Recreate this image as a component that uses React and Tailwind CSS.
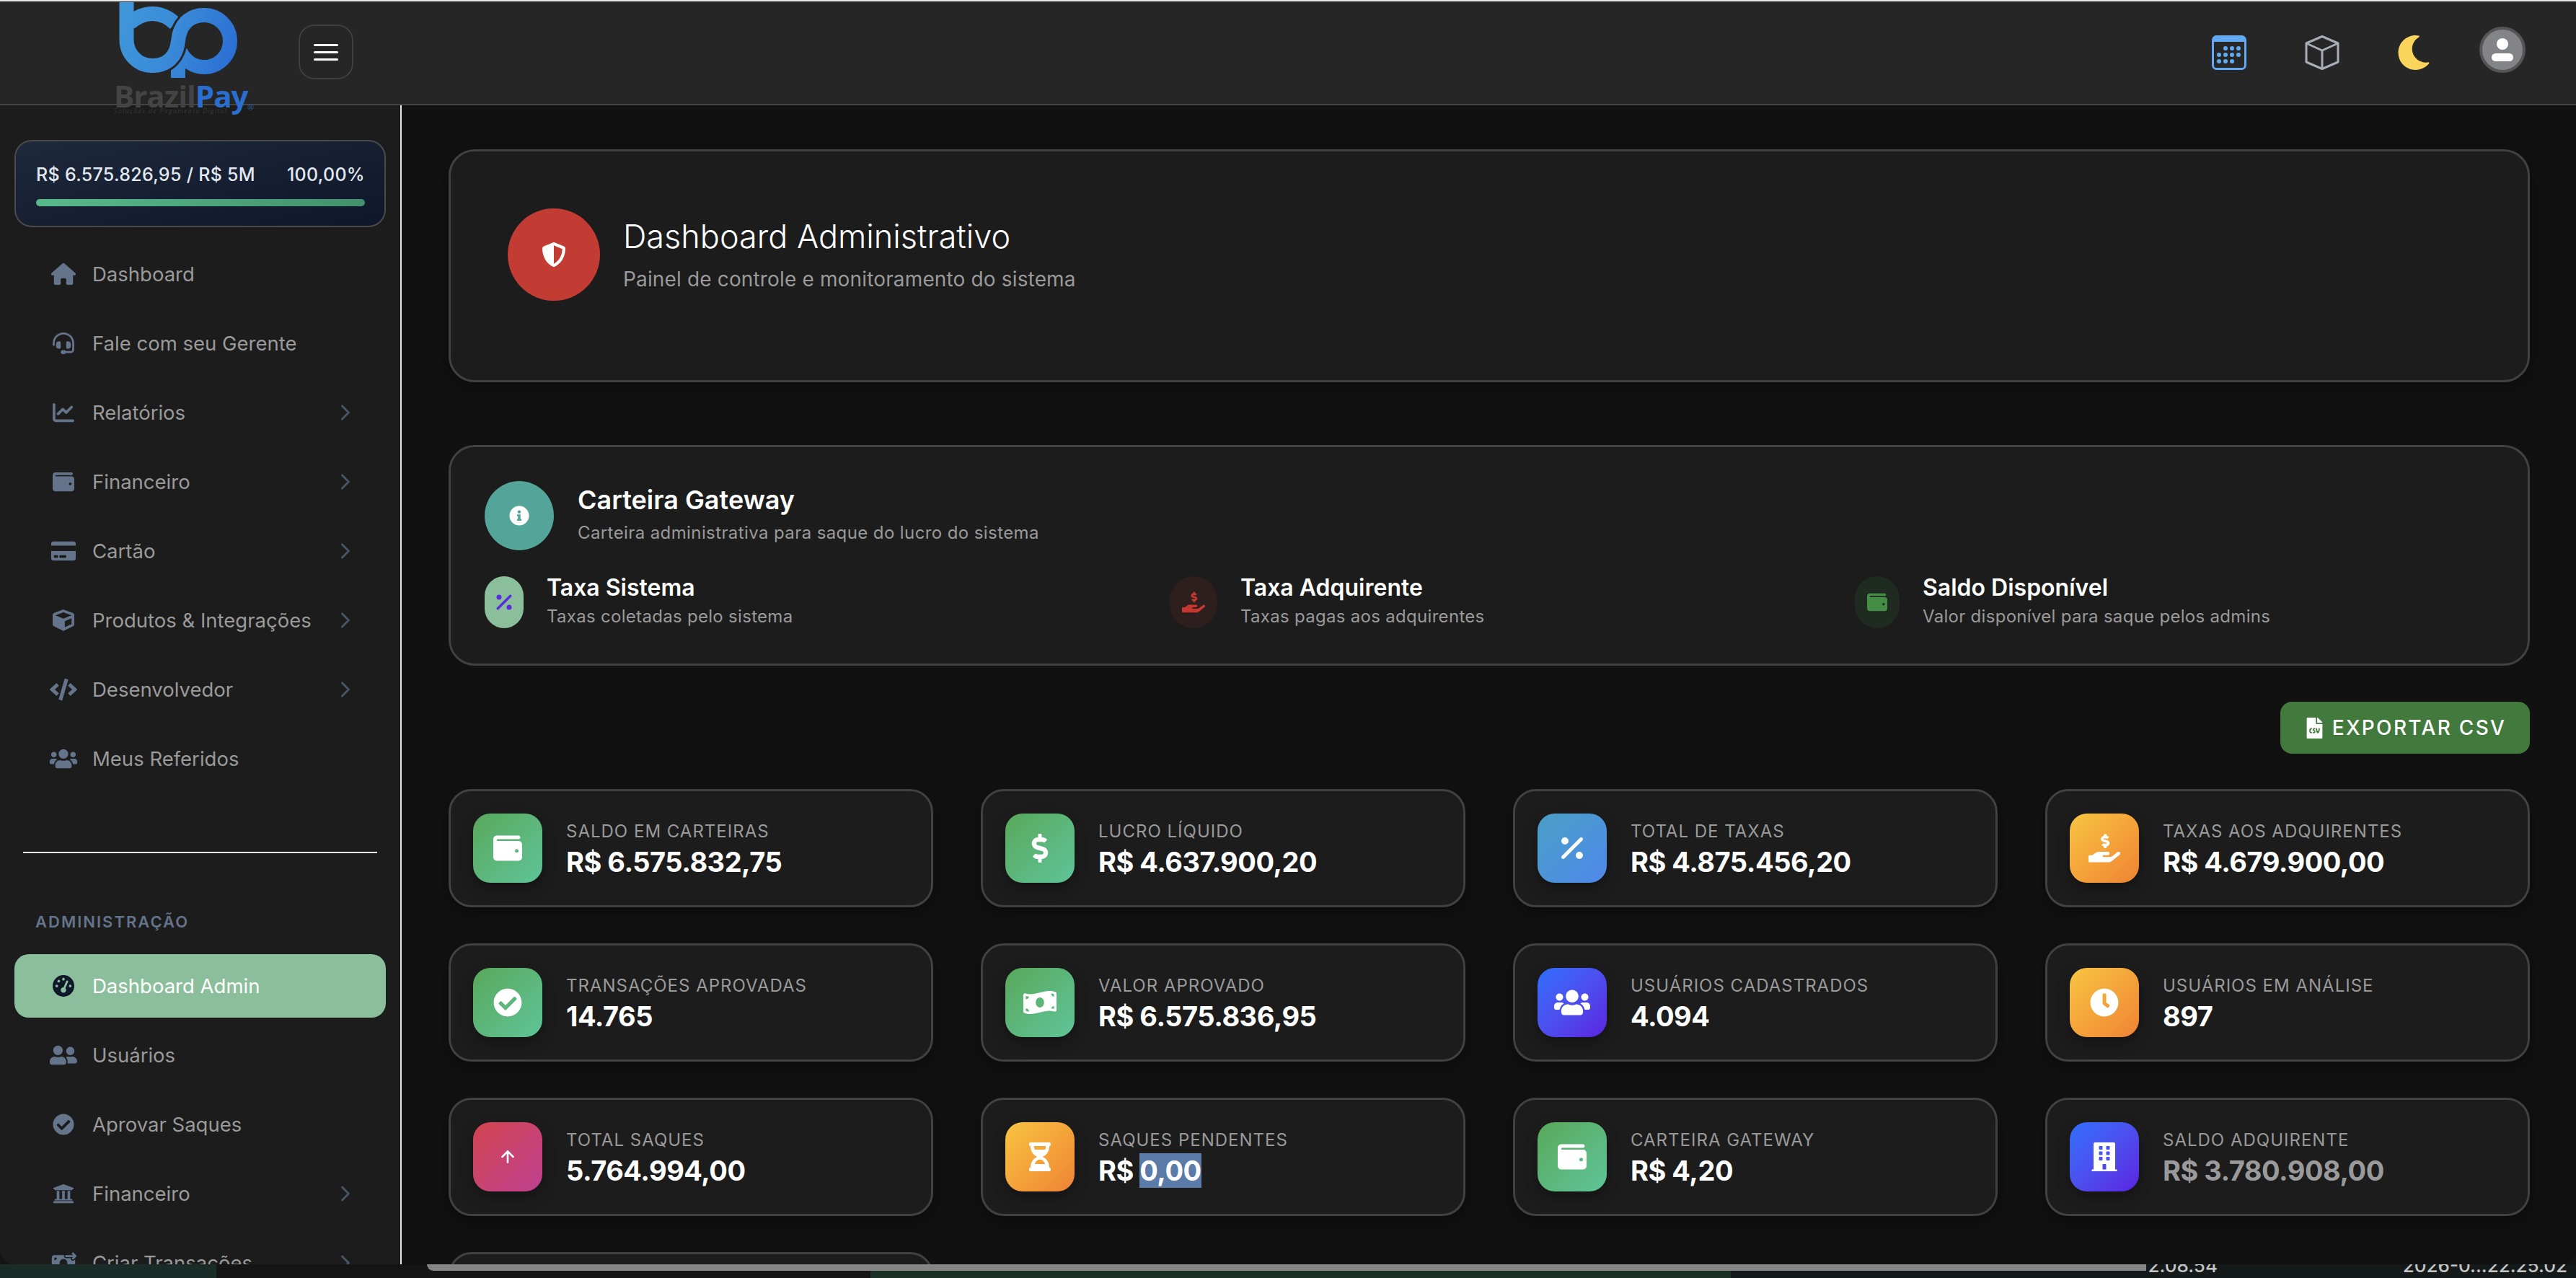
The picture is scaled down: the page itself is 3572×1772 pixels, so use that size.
import { ChevronRight, ArrowUp } from "lucide-react";
import {
  FaUsers, FaUserFriends, FaCheckCircle, FaUniversity, FaShieldAlt, FaInfoCircle, FaHandHoldingUsd, FaFileCsv,
  FaDollarSign, FaMoneyBillWave, FaClock, FaHourglassHalf, FaBuilding, FaMoon, FaCube, FaCode, FaCreditCard,
} from "react-icons/fa";
import { FaGaugeHigh, FaMoneyBillTransfer, FaHouse, FaHeadset, FaChartLine, FaWallet, FaPercent } from "react-icons/fa6";

const GREEN = "bg-gradient-to-br from-[#59a85a] to-[#5fc498]";
const BLUE = "bg-gradient-to-br from-[#4a9fc6] to-[#4f88ea]";
const ORANGE = "bg-gradient-to-br from-[#f8c541] to-[#ee8234]";
const INDIGO = "bg-gradient-to-br from-[#2c6ffb] to-[#5a21e0]";
const RED = "bg-gradient-to-br from-[#d2444c] to-[#bf3f90]";

const menuTop = [
  { label: "Dashboard", icon: <FaHouse size={34} /> },
  { label: "Fale com seu Gerente", icon: <FaHeadset size={30} /> },
  { label: "Relatórios", icon: <FaChartLine size={30} />, sub: true },
  { label: "Financeiro", icon: <FaWallet size={30} />, sub: true },
  { label: "Cartão", icon: <FaCreditCard size={34} />, sub: true },
  { label: "Produtos & Integrações", icon: <FaCube size={30} />, sub: true },
  { label: "Desenvolvedor", icon: <FaCode size={38} />, sub: true },
  { label: "Meus Referidos", icon: <FaUsers size={38} /> },
];

const menuAdmin = [
  { label: "Dashboard Admin", icon: <FaGaugeHigh size={30} />, active: true },
  { label: "Usuários", icon: <FaUserFriends size={38} /> },
  { label: "Aprovar Saques", icon: <FaCheckCircle size={30} /> },
  { label: "Financeiro", icon: <FaUniversity size={30} />, sub: true },
  { label: "Criar Transações", icon: <FaMoneyBillTransfer size={36} />, sub: true },
];

const stats = [
  { label: "SALDO EM CARTEIRAS", value: "R$ 6.575.832,75", bg: GREEN, icon: <FaWallet size={40} /> },
  { label: "LUCRO LÍQUIDO", value: "R$ 4.637.900,20", bg: GREEN, icon: <FaDollarSign size={40} /> },
  { label: "TOTAL DE TAXAS", value: "R$ 4.875.456,20", bg: BLUE, icon: <FaPercent size={40} /> },
  { label: "TAXAS AOS ADQUIRENTES", value: "R$ 4.679.900,00", bg: ORANGE, icon: <FaHandHoldingUsd size={44} /> },
  { label: "TRANSAÇÕES APROVADAS", value: "14.765", bg: GREEN, icon: <FaCheckCircle size={40} /> },
  { label: "VALOR APROVADO", value: "R$ 6.575.836,95", bg: GREEN, icon: <FaMoneyBillWave size={46} /> },
  { label: "USUÁRIOS CADASTRADOS", value: "4.094", bg: INDIGO, icon: <FaUsers size={50} /> },
  { label: "USUÁRIOS EM ANÁLISE", value: "897", bg: ORANGE, icon: <FaClock size={40} /> },
  { label: "TOTAL SAQUES", value: "5.764.994,00", bg: RED, icon: <ArrowUp size={26} strokeWidth={2.4} /> },
  { label: "SAQUES PENDENTES", value: "R$ ", selected: "0,00", bg: ORANGE, icon: <FaHourglassHalf size={40} /> },
  { label: "CARTEIRA GATEWAY", value: "R$ 4,20", bg: GREEN, icon: <FaWallet size={40} /> },
  { label: "SALDO ADQUIRENTE", value: "R$ 3.780.908,00", bg: INDIGO, icon: <FaBuilding size={40} />, dim: true },
];

const gatewayItems = [
  { title: "Taxa Sistema", text: "Taxas coletadas pelo sistema", width: "w-[54px]", bg: "bg-[#8bbf9b]", icon: <FaPercent size={28} className="text-[#5b2be0]" /> },
  { title: "Taxa Adquirente", text: "Taxas pagas aos adquirentes", width: "w-[66px]", bg: "bg-[#2e1f1f]", icon: <FaHandHoldingUsd size={32} className="text-[#c5372f]" /> },
  { title: "Saldo Disponível", text: "Valor disponível para saque pelos admins", width: "w-[62px]", bg: "bg-[#1f2a20]", icon: <FaWallet size={28} className="text-[#458c45]" /> },
];

function Logo() {
  return (
    <div className="absolute left-0 top-[-2px] z-10 h-[180px] w-[400px]">
      <svg viewBox="0 0 400 120" className="h-[120px] w-[400px]" fill="none">
        <defs>
          <linearGradient id="bp" gradientUnits="userSpaceOnUse" x1="165" y1="20" x2="330" y2="80">
            <stop offset="0" stopColor="#3f97d9" />
            <stop offset="0.45" stopColor="#3a8bd8" />
            <stop offset="1" stopColor="#2a6dd3" />
          </linearGradient>
        </defs>
        <g stroke="url(#bp)" strokeWidth="20">
          <path d="M180 32 Q195 19 211 19 Q229 19 243 33" />
          <path d="M283 93 A36 36 0 0 1 250 71" />
          <path d="M247 85 V108" />
        </g>
        <path d="M211 91 C235 91 245 75 247 57 C249 35 262 21 283 21" stroke="#262626" strokeWidth="26" />
        <path
          d="M175.5 3 V55 A35.5 36 0 0 0 211 91 C235 91 245 75 247 57 C249 35 262 21 283 21 A36 36 0 0 1 283 93"
          stroke="url(#bp)"
          strokeWidth="20"
        />
      </svg>
      <span className="absolute left-[158px] top-[108px] text-[42px] font-bold leading-[50px] tracking-[-1px] text-[#444444] [font-family:'Open_Sans',sans-serif]">
        Brazil<span className="text-[#2a6fd0]">Pay</span>
      </span>
      <span className="absolute left-[343px] top-[142px] text-[11px] leading-[14px] text-[#2a5c9c] [font-family:'Open_Sans',sans-serif]">®</span>
      <span className="absolute left-[158px] top-[148px] text-[9px] italic leading-[12px] tracking-[1.2px] text-[#383838] [font-family:'Open_Sans',sans-serif]">
        Soluções de Pagamento Digital
      </span>
    </div>
  );
}

function TopIcons() {
  return (
    <div className="ml-auto flex items-center pr-[70px]">
      <svg viewBox="0 0 48 48" className="h-[48px] w-[48px]">
        <rect x="1.5" y="1.5" width="45" height="45" rx="5" fill="none" stroke="#62a9f3" strokeWidth="3" />
        <path d="M1 9 V6 a5 5 0 0 1 5 -5 H42 a5 5 0 0 1 5 5 V9 Z" fill="#62a9f3" />
        {[[19, 18], [28, 18], [37, 18], [10, 27], [19, 27], [28, 27], [37, 27], [10, 36], [19, 36], [28, 36]].map(([cx, cy]) => (
          <circle key={`${cx}-${cy}`} cx={cx} cy={cy} r="3" fill="#62a9f3" />
        ))}
      </svg>
      <svg viewBox="0 0 48 48" className="ml-[81px] h-[48px] w-[48px]" fill="none" stroke="#a7aeb8" strokeWidth="3" strokeLinejoin="round">
        <path d="M24 1.5 L46 11 V37 L24 46.5 L2 37 V11 Z" />
        <path d="M2 11 L24 21 L46 11 M24 21 V46.5" />
      </svg>
      <FaMoon size={48} className="ml-[79px] text-[#fbd45c]" />
      <div className="mb-[8px] ml-[67px] flex h-[64px] w-[64px] flex-col items-center justify-center gap-[5px] rounded-full border-[4px] border-[#555555] bg-[#838487]">
        <div className="h-[16px] w-[16px] rounded-full bg-white" />
        <div className="h-[11px] w-[30px] rounded-full bg-white" />
      </div>
    </div>
  );
}

function MenuItem({ item }) {
  return (
    <div className={`flex h-[88px] items-center rounded-[20px] pl-[48px] pr-[38px] ${item.active ? "bg-[#8bbf9b] text-white" : "text-[#9a9a9a]"}`}>
      <span className={`flex w-[40px] shrink-0 justify-center ${item.active ? "text-[#0f172a]" : "text-[#64748b]"}`}>{item.icon}</span>
      <span className="ml-[20px] whitespace-nowrap text-[27.5px] leading-[36px]">{item.label}</span>
      {item.sub && <ChevronRight size={36} strokeWidth={2} className="ml-auto shrink-0 text-[#475569]" />}
    </div>
  );
}

function Sidebar() {
  return (
    <aside className="flex w-[557px] shrink-0 flex-col overflow-hidden border-r-2 border-[#e6e6e6] bg-[#1c1c1c] px-[20px] pt-[48px]">
      <div className="h-[121px] shrink-0 rounded-[24px] border-2 border-[#4a4a4a] bg-gradient-to-br from-[#1e293b] to-[#0f172a] pl-[28px] pr-[27px] pt-[30px]">
        <div className="flex items-center justify-between whitespace-nowrap text-[25px] font-medium leading-[32px] tracking-[0.3px] text-[#e2e8f0]">
          <span>R$ 6.575.826,95 / R$ 5M</span>
          <span>100,00%</span>
        </div>
        <div className="mt-[18px] h-[10px] rounded-full bg-gradient-to-r from-[#58ba8b] to-[#42916c]" />
      </div>
      <nav className="mt-[21px] flex shrink-0 flex-col gap-[8px]">
        {menuTop.map((item) => <MenuItem key={item.label} item={item} />)}
      </nav>
      <div className="mx-[12px] mt-[85px] h-[2px] shrink-0 bg-[#e6e6e6]" />
      <div className="ml-[29px] mt-[81px] h-[28px] shrink-0 text-[22px] font-semibold leading-[28px] tracking-[2px] text-[#64748b]">ADMINISTRAÇÃO</div>
      <nav className="mt-[31px] flex shrink-0 flex-col gap-[8px]">
        {menuAdmin.map((item) => <MenuItem key={item.label} item={item} />)}
      </nav>
    </aside>
  );
}

function StatCard({ stat }) {
  return (
    <div className="flex h-[164px] items-center rounded-[32px] border-[3px] border-[#414141] bg-[#1c1c1c] pl-[31px] shadow-[0_8px_20px_rgba(0,0,0,0.35)]">
      <div className={`flex h-[96px] w-[96px] shrink-0 items-center justify-center rounded-[24px] text-white shadow-[0_8px_18px_rgba(0,0,0,0.3)] ${stat.bg}`}>{stat.icon}</div>
      <div className="ml-[33px] mt-[6px] min-w-0">
        <div className="whitespace-nowrap text-[24px] leading-[28px] tracking-[1px] text-[#9a9a9a]">{stat.label}</div>
        <div className={`mt-[4px] whitespace-pre text-[38px] font-bold leading-[48px] tracking-[-0.5px] ${stat.dim ? "text-[#9a9a9a]" : "text-white"}`}>
          {stat.value}
          {stat.selected && <span className="inline-block bg-[#5b7ba8]">{stat.selected}</span>}
        </div>
      </div>
    </div>
  );
}

export default function App() {
  return (
    <div className="flex h-[1772px] w-[3572px] flex-col overflow-hidden bg-[#141414] [font-family:Inter,sans-serif]">
      <div className="flex h-[1753px] shrink-0 flex-col overflow-hidden rounded-b-[20px] border-t-2 border-[#e8e8e8] bg-[#111111]">
        <header className="relative flex h-[144px] shrink-0 items-center border-b-2 border-[#444444] bg-[#262626] pl-[414px]">
          <Logo />
          <button className="mb-[2px] flex h-[76px] w-[76px] flex-col items-center justify-center gap-[7px] rounded-[22px] border-2 border-[#3f3f3f]">
            <span className="h-[3px] w-[34px] rounded-full bg-white" />
            <span className="h-[3px] w-[34px] rounded-full bg-white" />
            <span className="h-[3px] w-[34px] rounded-full bg-white" />
          </button>
          <TopIcons />
        </header>
        <div className="flex min-h-0 flex-1">
          <Sidebar />
          <main className="min-w-0 flex-1 overflow-hidden pl-[65px] pr-[64px] pt-[61px]">
            <section className="flex h-[323px] items-start rounded-[36px] border-[3px] border-[#414141] bg-[#1c1c1c] pl-[79px] pt-[79px] shadow-[0_8px_24px_rgba(0,0,0,0.3)]">
              <div className="flex h-[128px] w-[128px] shrink-0 items-center justify-center rounded-full bg-[#c23c34] text-white">
                <FaShieldAlt size={34} />
              </div>
              <div className="ml-[32px] pt-[10px]">
                <h1 className="text-[45px] font-light leading-[58px] text-white">Dashboard Administrativo</h1>
                <p className="mt-[14px] text-[28px] leading-[32px] tracking-[0.15px] text-[#9a9a9a]">Painel de controle e monitoramento do sistema</p>
              </div>
            </section>

            <section className="mt-[87px] h-[306px] rounded-[36px] border-[3px] border-[#414141] bg-[#1c1c1c] px-[47px] pt-[47px]">
              <div className="flex items-center">
                <div className="flex h-[96px] w-[96px] shrink-0 items-center justify-center rounded-full bg-[#52a598] text-white">
                  <FaInfoCircle size={28} />
                </div>
                <div className="ml-[33px] pt-[2px]">
                  <div className="mb-[-4px] text-[36px] font-semibold leading-[44px] text-white">Carteira Gateway</div>
                  <div className="mb-[8px] mt-[14px] text-[24px] leading-[28px] tracking-[0.4px] text-[#9a9a9a]">Carteira administrativa para saque do lucro do sistema</div>
                </div>
              </div>
              <div className="mt-[36px] grid grid-cols-3 gap-x-[64px]">
                {gatewayItems.map((g) => (
                  <div key={g.title} className="flex items-center">
                    <div className={`flex h-[72px] shrink-0 items-center justify-center rounded-full ${g.width} ${g.bg}`}>{g.icon}</div>
                    <div className="ml-[32px] mt-[-6px]">
                      <div className="text-[32px] font-semibold leading-[40px] text-white">{g.title}</div>
                      <div className="mt-[6px] text-[24px] leading-[28px] tracking-[0.3px] text-[#9a9a9a]">{g.text}</div>
                    </div>
                  </div>
                ))}
              </div>
            </section>

            <div className="mt-[50px] flex justify-end">
              <button className="flex h-[72px] w-[346px] items-center justify-center gap-[10px] rounded-[16px] bg-[#427a3d] text-[28px] font-medium tracking-[2.3px] text-white">
                <FaFileCsv size={29} />
                EXPORTAR CSV
              </button>
            </div>

            <div className="mt-[49px] grid grid-cols-4 gap-x-[66px] gap-y-[50px]">
              {stats.map((s) => <StatCard key={s.label} stat={s} />)}
              <div className="h-[164px] rounded-[32px] border-[3px] border-[#414141] bg-[#1c1c1c]" />
            </div>
          </main>
        </div>
      </div>

      <div className="relative flex h-[19px] shrink-0 overflow-hidden">
        <div className="w-[300px] bg-[#1a2c28]" />
        <div className="w-[907px] bg-[#151515]" />
        <div className="w-[1193px] bg-[#1b3128]" />
        <div className="flex-1 bg-[#14191a]" />
        <div className="absolute left-[592px] top-0 h-[9px] w-[2384px] rounded-bl-[10px] bg-[#858585]" />
        <span className="absolute right-[497px] top-[-11px] text-[26px] font-medium leading-[26px] text-[#c4c4c4]">2.08.54</span>
        <span className="absolute right-[12px] top-[-11px] text-[26px] font-medium leading-[26px] text-[#c4c4c4]">2026-0...22.25.02</span>
      </div>
    </div>
  );
}
